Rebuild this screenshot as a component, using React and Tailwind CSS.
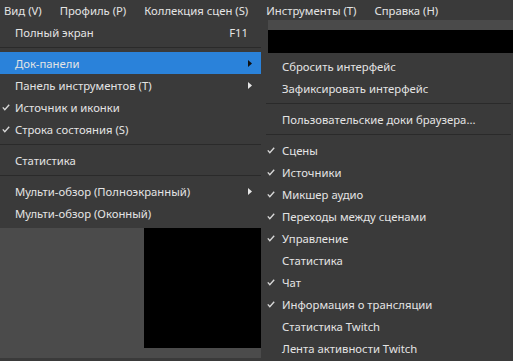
import React from 'react'

const font = { fontFamily: '"Noto Sans", "Open Sans", sans-serif' }

function Check() {
    return (
        <svg width="8" height="7" viewBox="0 0 8 7" className="block">
            <polyline points="0.8,3.4 2.8,5.6 7.2,0.8" fill="none" stroke="#d8d8d8" strokeWidth="1.4" />
        </svg>
    )
}

function Arrow({ dark }) {
    return (
        <svg width="4" height="7" viewBox="0 0 4 7" className="block">
            <polygon points="0,0 4,3.5 0,7" fill={dark ? '#111' : '#e6e6e6'} />
        </svg>
    )
}

function Item({ label, checked, shortcut, sub, active, textLeft = 'pl-[15px]', checkLeft = 'left-[2px]' }) {
    return (
        <div className={`relative h-[22px] flex items-center ${textLeft} pr-[9px] ${active ? 'bg-[#2a82da]' : ''}`}>
            {checked && (
                <span className={`absolute ${checkLeft} top-[8px]`}>
                    <Check />
                </span>
            )}
            <span className="flex-1 pt-[3px] text-[11.3px] text-[#e4e4e4] whitespace-nowrap">{label}</span>
            {shortcut && <span className="pt-[3px] text-[11.3px] text-[#e4e4e4] mr-[4px]">{shortcut}</span>}
            {sub && <Arrow dark={active} />}
        </div>
    )
}

function Sep({ className = '' }) {
    return (
        <div className={`h-[9px] flex items-center ${className}`}>
            <div className="h-px w-full bg-[#2a2a2a]" />
        </div>
    )
}

const topMenus = ['Вид (V)', 'Профиль (P)', 'Коллекция сцен (S)', 'Инструменты (T)', 'Справка (H)']

const docks = [
    { label: 'Сцены', checked: true },
    { label: 'Источники', checked: true },
    { label: 'Микшер аудио', checked: true },
    { label: 'Переходы между сценами', checked: true },
    { label: 'Управление', checked: true },
    { label: 'Статистика' },
    { label: 'Чат', checked: true },
    { label: 'Информация о трансляции', checked: true },
    { label: 'Статистика Twitch' },
    { label: 'Лента активности Twitch' },
]

export default function App() {
    return (
        <div className="relative w-[513px] h-[361px] overflow-hidden bg-[#3a3a3a]" style={font}>
            {/* menu bar */}
            <div className="h-[20px] flex items-center pt-[2px] pl-[4px] gap-[18px]">
                {topMenus.map((m) => (
                    <span key={m} className="text-[11.3px] text-[#e4e4e4] whitespace-nowrap">{m}</span>
                ))}
            </div>

            {/* app content behind the menus */}
            <div className="flex h-[341px]">
                <div className="w-[268px] flex flex-col">
                    <div className="h-[208px]" />
                    <div className="w-[261px] h-[130px] bg-[#4b4b4b] flex justify-end items-start">
                        <div className="w-[117px] h-[120px] bg-black" />
                    </div>
                </div>
                <div className="flex-1 flex flex-col">
                    <div className="h-[10px] bg-[#4a4a4a]" />
                    <div className="h-[23px] bg-black" />
                </div>
            </div>

            {/* View menu */}
            <div className="absolute left-0 top-[20px] w-[261px] h-[208px] bg-[#3a3a3a] pt-[1px]">
                <Item label="Полный экран" shortcut="F11" />
                <Sep />
                <Item label="Док-панели" sub active />
                <Item label="Панель инструментов (T)" sub />
                <Item label="Источник и иконки" checked />
                <Item label="Строка состояния (S)" checked />
                <Sep />
                <Item label="Статистика" />
                <Sep />
                <Item label="Мульти-обзор (Полноэкранный)" sub />
                <Item label="Мульти-обзор (Оконный)" />
            </div>

            {/* Docks submenu */}
            <div className="absolute left-[261px] top-[53px] w-[252px] h-[308px] bg-[#3a3a3a] pt-[2px]">
                <Item label="Сбросить интерфейс" textLeft="pl-[21px]" />
                <Item label="Зафиксировать интерфейс" textLeft="pl-[21px]" />
                <Sep className="pl-[5px] pr-[2px]" />
                <Item label="Пользовательские доки браузера..." textLeft="pl-[21px]" />
                <Sep className="pl-[5px] pr-[2px]" />
                {docks.map((d) => (
                    <Item key={d.label} label={d.label} checked={d.checked} textLeft="pl-[21px]" checkLeft="left-[6px]" />
                ))}
            </div>
        </div>
    )
}
